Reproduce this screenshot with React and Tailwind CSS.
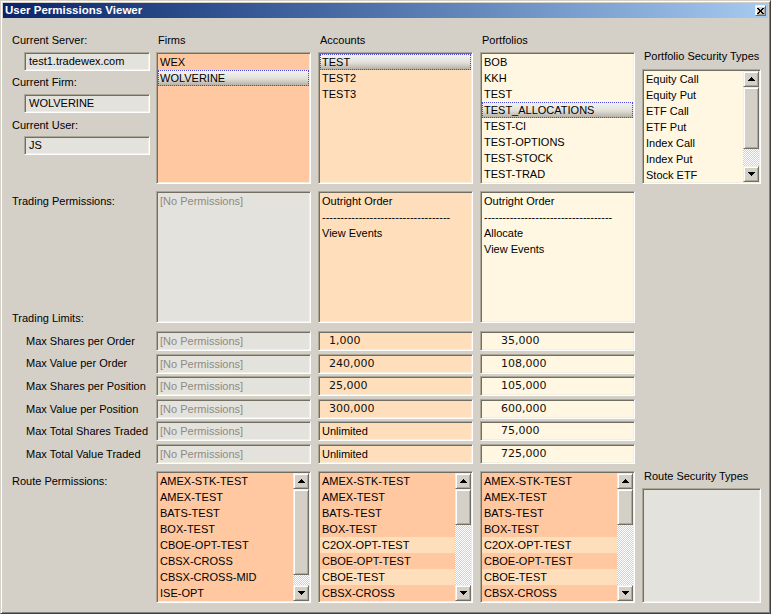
import React from "react";

const sunken =
  "border border-t-[#aca899] border-l-[#aca899] border-b-white border-r-white p-px shadow-[inset_1px_1px_0_#716f64,inset_-1px_-1px_0_#f1efe2]";
const raised =
  "bg-[#d4d0c8] border border-t-[#f1efe2] border-l-[#f1efe2] border-b-[#716f64] border-r-[#716f64] shadow-[inset_1px_1px_0_#ffffff,inset_-1px_-1px_0_#aca899]";
const grid = "grid grid-cols-[137px_155px_155px_155px_119px] gap-x-[7px]";

const PEACH = "bg-[#ffc8a0]";
const LIGHT = "bg-[#ffdfbb]";
const CREAM = "bg-[#fff7e1]";
const GRAY = "bg-[#e4e2dd]";

const Label = ({ children, className = "" }) => (
  <div className={`h-[14px] whitespace-nowrap text-[11px] leading-[14px] ${className}`}>{children}</div>
);

const TextBox = ({ children, className = "" }) => (
  <div className={`${sunken} ${GRAY} ml-[12px] h-[19px] w-[126px] pl-[4px] text-[11px] leading-[15px] ${className}`}>
    {children}
  </div>
);

const Arrow = ({ up }) => (
  <svg width="7" height="4" viewBox="0 0 7 4" shapeRendering="crispEdges">
    <path
      fill="#000"
      d={up ? "M3 0h1v1h1v1h1v1h1v1H0V3h1V2h1V1h1z" : "M0 0h7v1H6v1H5v1H4v1H3V3H2V2H1V1H0z"}
    />
  </svg>
);

const ScrollBar = ({ thumb }) => (
  <div className="flex w-[16px] shrink-0 flex-col">
    <div className={`${raised} flex h-[16px] shrink-0 items-center justify-center`}>
      <Arrow up />
    </div>
    <div className={`${raised} shrink-0 ${thumb}`} />
    <div className="flex-1 [background-image:repeating-conic-gradient(#d4d0c8_0_25%,#ffffff_0_50%)] [background-size:2px_2px]" />
    <div className={`${raised} flex h-[16px] shrink-0 items-center justify-center`}>
      <Arrow />
    </div>
  </div>
);

const Item = ({ children, selected, bg = "" }) => (
  <div
    className={`h-[16px] whitespace-nowrap pl-[2px] text-[11px] leading-[16px] ${
      selected
        ? "bg-[linear-gradient(to_bottom,#f8f7f4,#e2dfd8_55%,#aeaa9f)] outline-1 -outline-offset-1 outline-dotted outline-[#4646e6]"
        : bg
    }`}
  >
    {children}
  </div>
);

const ListBox = ({ items, bg, selected, className = "" }) => (
  <div className={`${sunken} ${bg} ${className}`}>
    {items.map((it) => (
      <Item key={it} selected={it === selected}>
        {it}
      </Item>
    ))}
  </div>
);

const RouteList = ({ rows, thumb }) => (
  <div className={`${sunken} ${PEACH} flex h-[132px]`}>
    <div className="flex-1 overflow-hidden">
      {rows.map(([name, on]) => (
        <Item key={name} bg={on ? PEACH : LIGHT}>
          {name}
        </Item>
      ))}
    </div>
    <ScrollBar thumb={thumb} />
  </div>
);

const limits = [
  ["Max Shares per Order", "1,000", "35,000"],
  ["Max Value per Order", "240,000", "108,000"],
  ["Max Shares per Position", "25,000", "105,000"],
  ["Max Value per Position", "300,000", "600,000"],
  ["Max Total Shares Traded", "Unlimited", "75,000"],
  ["Max Total Value Traded", "Unlimited", "725,000"],
];

const firmRoutes = [
  "AMEX-STK-TEST",
  "AMEX-TEST",
  "BATS-TEST",
  "BOX-TEST",
  "CBOE-OPT-TEST",
  "CBSX-CROSS",
  "CBSX-CROSS-MID",
  "ISE-OPT",
].map((r) => [r, true]);

const routes = [
  ["AMEX-STK-TEST", true],
  ["AMEX-TEST", true],
  ["BATS-TEST", true],
  ["BOX-TEST", true],
  ["C2OX-OPT-TEST", false],
  ["CBOE-OPT-TEST", true],
  ["CBOE-TEST", false],
  ["CBSX-CROSS", true],
];

const LimitValue = ({ value, bg, numPad }) => {
  const isNum = value !== "Unlimited";
  return (
    <div className={`${sunken} ${bg} h-[20px] whitespace-nowrap leading-[16px] ${isNum ? `${numPad} font-['DejaVu_Sans',Verdana,sans-serif] text-[11px] text-[#111]` : "pl-[3px] text-[11px]"}`}>
      {value}
    </div>
  );
};

export default function App() {
  return (
    <div className="h-[614px] w-[771px] overflow-hidden border border-t-[#d4d0c8] border-l-[#d4d0c8] border-b-[#404040] border-r-[#404040] bg-[#d4d0c8] p-[2px] font-['Liberation_Sans',Arial,sans-serif] text-black shadow-[inset_1px_1px_0_#ffffff,inset_-1px_-1px_0_#808080]">
      <div className="flex h-[15px] items-center justify-between bg-linear-to-r from-[#0a246a] to-[#a6caf0] pl-[2px] pr-[2px]">
        <span className="text-[11.5px] font-bold leading-none text-white">User Permissions Viewer</span>
        <div className={`${raised} flex h-[11px] w-[11px] items-center justify-center`}>
          <svg width="7" height="6" viewBox="0 0 7 6" shapeRendering="crispEdges">
            <path fill="#000" d="M0 0h2v1h1v1h1V1h1V0h2v1H6v1H5v2h1v1h1v1H5V5H4V4H3v1H2v1H0V5h1V4h1V2H1V1H0z" />
          </svg>
        </div>
      </div>

      <div className="pl-[9px]">
        {/* servers / firms / accounts / portfolios */}
        <div className={`${grid} pt-[15px]`}>
          <div>
            <Label>Current Server:</Label>
            <TextBox className="mt-[5px]">test1.tradewex.com</TextBox>
            <Label className="mt-[4px]">Current Firm:</Label>
            <TextBox className="mt-[5px]">WOLVERINE</TextBox>
            <Label className="mt-[5px]">Current User:</Label>
            <TextBox className="mt-[4px]">JS</TextBox>
          </div>
          <div>
            <Label className="pl-[2px]">Firms</Label>
            <ListBox className="mt-[5px] h-[132px]" bg={PEACH} items={["WEX", "WOLVERINE"]} selected="WOLVERINE" />
          </div>
          <div>
            <Label className="pl-[2px]">Accounts</Label>
            <ListBox className="mt-[5px] h-[132px]" bg={LIGHT} items={["TEST", "TEST2", "TEST3"]} selected="TEST" />
          </div>
          <div>
            <Label className="pl-[2px]">Portfolios</Label>
            <ListBox
              className="mt-[5px] h-[132px]"
              bg={CREAM}
              items={["BOB", "KKH", "TEST", "TEST_ALLOCATIONS", "TEST-CI", "TEST-OPTIONS", "TEST-STOCK", "TEST-TRAD"]}
              selected="TEST_ALLOCATIONS"
            />
          </div>
          <div className="pt-[16px]">
            <Label className="pl-[2px]">Portfolio Security Types</Label>
            <div className={`${sunken} ${CREAM} mt-[6px] flex h-[115px]`}>
              <div className="flex-1 overflow-hidden">
                {["Equity Call", "Equity Put", "ETF Call", "ETF Put", "Index Call", "Index Put", "Stock ETF"].map((t) => (
                  <Item key={t}>{t}</Item>
                ))}
              </div>
              <ScrollBar thumb="h-[62px]" />
            </div>
          </div>
        </div>

        {/* trading permissions */}
        <div className={`${grid} mt-[7px] h-[132px]`}>
          <div className="flex flex-col pt-[3px]">
            <Label>Trading Permissions:</Label>
            <Label className="mt-auto -mb-[2px]">Trading Limits:</Label>
          </div>
          <div className={`${sunken} ${GRAY} text-[#8e8b82]`}>
            <Item>[No Permissions]</Item>
          </div>
          <div className={`${sunken} ${LIGHT}`}>
            <Item>Outright Order</Item>
            <Item>-----------------------------------</Item>
            <Item>View Events</Item>
          </div>
          <div className={`${sunken} ${CREAM}`}>
            <Item>Outright Order</Item>
            <Item>-----------------------------------</Item>
            <Item>Allocate</Item>
            <Item>View Events</Item>
          </div>
          <div />
        </div>

        {/* trading limits */}
        <div className={`${grid} mt-[8px] gap-y-[2.6px]`}>
          {limits.map(([label, acct, port]) => (
            <React.Fragment key={label}>
              <div className="flex h-[20px] items-center whitespace-nowrap pl-[14px] text-[11px]">{label}</div>
              <div className={`${sunken} ${GRAY} h-[20px] pl-[3px] text-[11px] leading-[16px] text-[#8e8b82]`}>
                [No Permissions]
              </div>
              <LimitValue value={acct} bg={LIGHT} numPad="pl-[10px]" />
              <LimitValue value={port} bg={CREAM} numPad="pl-[20px]" />
              <div />
            </React.Fragment>
          ))}
        </div>

        {/* routes */}
        <div className={`${grid} mt-[7px]`}>
          <div className="pt-[3px]">
            <Label>Route Permissions:</Label>
          </div>
          <RouteList rows={firmRoutes} thumb="h-[86px]" />
          <RouteList rows={routes} thumb="h-[36px]" />
          <RouteList rows={routes} thumb="h-[36px]" />
          <div className="-mt-[2px]">
            <Label className="pl-[2px]">Route Security Types</Label>
            <div className={`${sunken} ${GRAY} mt-[5px] h-[115px]`} />
          </div>
        </div>
      </div>
    </div>
  );
}
